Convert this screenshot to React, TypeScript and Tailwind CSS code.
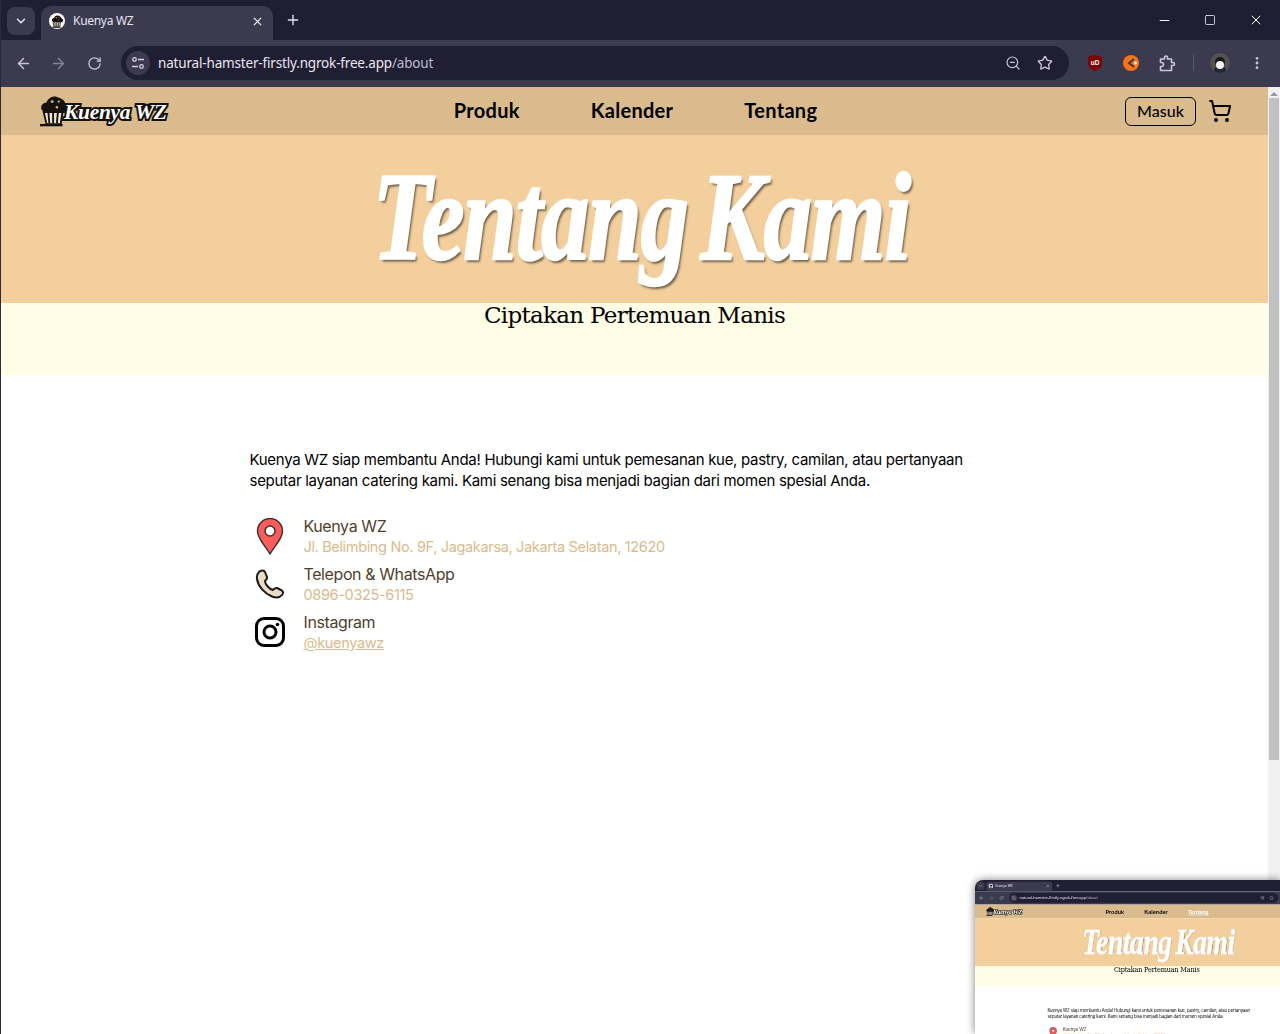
import { ArrowLeft, ArrowRight, ChevronDown, EllipsisVertical, Minus, Plus, RotateCw, ShoppingCart, Square, Star, X, ZoomOut } from "lucide-react";

function Muffin({ size = 34 }: { size?: number }) {
  return (
    <svg width={size} height={size} viewBox="0 0 34 34">
      <path d="M3 16c-2-4 1-8 5-8 1-4 6-8 11-6 4 1 8 3 9 7 3 1 5 5 3 8l-4 2H7z" fill="#17110c" />
      <circle cx="14" cy="7" r="1.500" fill="#d9bb8d" />
      <circle cx="21" cy="7" r="1.200" fill="#d9bb8d" />
      <circle cx="19" cy="13" r="1.300" fill="#d9bb8d" />
      <path d="M5 18h20l-2 13H8z" fill="#efe5d3" stroke="#17110c" strokeWidth="2" />
      <path d="M10 19l1 11M15 19v11M20 19l-1 11" stroke="#17110c" strokeWidth="2" />
      <path d="M1 32h24" stroke="#17110c" strokeWidth="2.500" />
    </svg>
  );
}

function Logo() {
  return (
    <div className="flex items-center">
      <Muffin size={32} />
      <span className="-ml-[7px] mt-[3px] font-['Liberation_Serif',serif] text-[21.500px] leading-none font-bold tracking-[-0.3px] whitespace-nowrap text-white italic [-webkit-text-stroke:4px_#17110c] [paint-order:stroke_fill]">
        Kuenya WZ
      </span>
    </div>
  );
}

function PinIcon() {
  return (
    <svg width="28" height="37" viewBox="0 0 28 37">
      <path d="M14 36C9 27 1.500 21 1.500 13a12.500 12.500 0 0 1 25 0c0 8-7.500 14-12.500 23z" fill="#fb5d5d" stroke="#3f3030" strokeWidth="1.500" />
      <circle cx="14" cy="13" r="5" fill="#fff" stroke="#3f3030" strokeWidth="1.500" />
    </svg>
  );
}

function PhoneIcon() {
  return (
    <svg width="30" height="30" viewBox="0 0 30 30">
      <path
        d="M4 3C6 1 9 1 10 3L12 8C12.500 10 11 11 10 12C10 15 14 20 18 21C19 20 20 18.500 22 19L26 21C28.500 22 28.500 24 27 26C25 28.500 21 29 17 27.500C9 24 3 17 2 10C1.500 7 2.500 4.500 4 3Z"
        fill="#eadcc6"
        stroke="#1a1a1a"
        strokeWidth="2"
        strokeLinejoin="round"
      />
    </svg>
  );
}

function InstagramIcon() {
  return (
    <svg width="30" height="30" viewBox="0 0 30 30" fill="none">
      <rect x="1.500" y="1.500" width="27" height="27" rx="7.500" stroke="#000" strokeWidth="3" />
      <circle cx="15" cy="15" r="6" stroke="#000" strokeWidth="3" />
      <circle cx="22.500" cy="7.500" r="1.800" fill="#000" />
    </svg>
  );
}

function BrowserBar() {
  return (
    <div className="shrink-0 font-['Noto_Sans',sans-serif]">
      <div className="flex h-10 items-end bg-[#201e33] pl-[6px]">
        <div className="mb-[5px] flex h-7 w-7 items-center justify-center self-end rounded-lg bg-[#3c3a4e] text-[#e6e4ee]">
          <ChevronDown size={14} strokeWidth={2.500} />
        </div>
        <div className="ml-[6px] flex h-[34px] w-[232px] items-center rounded-t-[10px] bg-[#3c3a4e] pr-[9px] pb-1 pl-2 text-[#e6e4ee]">
          <span className="flex h-4 w-4 items-center justify-center overflow-hidden rounded-full bg-white">
            <Muffin size={13} />
          </span>
          <span className="ml-2 flex-1 text-xs tracking-[-0.3px]">Kuenya WZ</span>
          <X size={13} strokeWidth={2.200} />
        </div>
        <Plus size={16} strokeWidth={2} className="mb-[12px] ml-[12px] text-[#e6e4ee]" />
        <div className="mb-[12px] ml-auto flex items-center text-white">
          <Minus size={15} strokeWidth={1.500} className="mr-[32px]" />
          <Square size={12} strokeWidth={1.500} className="mr-[32px]" />
          <X size={16} strokeWidth={1.500} className="mr-[16px]" />
        </div>
      </div>
      <div className="flex h-[47px] items-center bg-[#3c3a4e] pb-[1px] text-[#c9c7d5]">
        <ArrowLeft size={17} strokeWidth={2} className="ml-[14px]" />
        <ArrowRight size={17} strokeWidth={2} className="ml-[18px] text-[#85839a]" />
        <RotateCw size={15} strokeWidth={2} className="ml-[20px]" />
        <div className="ml-[19px] flex h-[34px] w-[948px] items-center rounded-full bg-[#201e33] pr-[16px] pl-[5px]">
          <span className="flex h-6 w-6 items-center justify-center rounded-full bg-[#3c3a4e]">
            <svg width="14" height="14" viewBox="0 0 14 14" fill="none" stroke="#d5d3e0" strokeWidth="1.300">
              <circle cx="3.500" cy="3.500" r="1.800" />
              <path d="M7 3.500h6M1 10.500h6" />
              <circle cx="10.500" cy="10.500" r="1.800" />
            </svg>
          </span>
          <span className="ml-[8px] flex-1 text-[13.500px] tracking-[-0.17px] text-[#e8e6f0]">
            natural-hamster-firstly.ngrok-free.app<span className="text-[#bdbbca]">/about</span>
          </span>
          <ZoomOut size={16} strokeWidth={1.800} />
          <Star size={16} strokeWidth={2} className="ml-[16px]" />
        </div>
        <svg width="14" height="16" viewBox="0 0 14 16" className="ml-[19px]">
          <path d="M7 0l7 2v6c0 4-3 6.500-7 8-4-1.500-7-4-7-8V2z" fill="#800000" />
          <text x="7" y="10" fontSize="6.500" fontWeight="700" fill="#fff" textAnchor="middle" fontFamily="Liberation Sans">
            uD
          </text>
        </svg>
        <svg width="16" height="16" viewBox="0 0 16 16" className="ml-[21px]">
          <circle cx="8" cy="8" r="8" fill="#f97316" />
          <path d="M11 4 6 8l5 4" fill="none" stroke="#3c3a4e" strokeWidth="2" />
          <circle cx="12.500" cy="8" r="1.500" fill="#fff" />
        </svg>
        <svg width="17" height="17" viewBox="0 0 17 17" fill="none" stroke="#c9c7d5" strokeWidth="1.600" className="ml-[20px]">
          <path d="M1.500 4h4V2.500a1.500 1.500 0 0 1 3 0V4h4v3.500h1.500a1.500 1.500 0 0 1 0 3H12.500V15.500H1.500v-4h1a2 2 0 0 0 0-4h-1z" strokeLinejoin="round" />
        </svg>
        <span className="ml-[17px] h-4 w-px bg-[#5a586c]" />
        <span className="ml-[16px] flex h-5 w-5 items-center justify-center overflow-hidden rounded-full bg-[#55534f]">
          <span className="mt-1 h-2 w-2 rounded-full bg-[#f3f3f3] shadow-[0_-3px_0_1px_#191919,0_6px_0_2px_#22263a]" />
        </span>
        <EllipsisVertical size={16} strokeWidth={2.200} className="ml-[19px]" />
      </div>
    </div>
  );
}

function Site({ active = false }: { active?: boolean }) {
  return (
    <div className="min-w-0 flex-1 bg-white">
      <nav className="flex h-12 items-center bg-[#d9bb8d]">
        <div className="flex-1 pl-[38px]">
          <Logo />
        </div>
        <ul className="-mt-[3px] flex gap-[71px] font-['Lato',sans-serif] text-xl leading-none font-bold tracking-[0.3px] text-black">
          <li>Produk</li>
          <li>Kalender</li>
          <li className={active ? "text-white underline underline-offset-4" : ""}>Tentang</li>
        </ul>
        <div className="flex flex-1 items-center justify-end pr-[36px]">
          <button className="h-[29px] w-[71px] rounded-md border border-black font-['Lato',sans-serif] text-base leading-none font-medium text-black">
            Masuk
          </button>
          <ShoppingCart size={24} strokeWidth={2} className="ml-[12px] text-black" />
        </div>
      </nav>
      <section className="relative flex h-[168px] justify-center bg-[#f3cf9d] pt-[11px] pl-[14px]">
        <h1 className="h-[110px] origin-top scale-y-[1.3] font-['Liberation_Serif',serif] text-[96px] leading-[110px] font-bold tracking-[-1px] whitespace-nowrap text-white italic [word-spacing:-10px] [-webkit-text-stroke:2px_#fff] [text-shadow:2px_2px_2px_rgba(0,0,0,0.55)]">
          Tentang Kami
        </h1>
      </section>
      <section className="h-[72px] bg-[#fffde5] text-center">
        <p className="font-['DejaVu_Serif',serif] text-[23px] leading-[25px] tracking-[-0.7px] text-black">
          Ciptakan Pertemuan Manis
        </p>
      </section>
      <section className="mx-auto mt-[74px] w-[770px] font-['Inter',sans-serif]">
        <p className="max-w-3xl text-[15px] leading-[21px] tracking-[-0.29px] text-black">
          Kuenya WZ siap membantu Anda! Hubungi kami untuk pemesanan kue, pastry, camilan, atau pertanyaan seputar layanan catering kami. Kami senang bisa menjadi bagian dari momen spesial Anda.
        </p>
        <div className="mt-[24px] flex flex-col gap-[6px]">
          <div className="flex h-[42px] items-center">
            <span className="flex w-[40px] justify-center">
              <PinIcon />
            </span>
            <div className="ml-[14px]">
              <p className="text-[16px] leading-[22px] tracking-[-0.4px] text-[#4f3f2c]">Kuenya WZ</p>
              <p className="text-[14.500px] leading-[20px] tracking-[-0.34px] text-[#d9bb8d]">Jl. Belimbing No. 9F, Jagakarsa, Jakarta Selatan, 12620</p>
            </div>
          </div>
          <div className="flex h-[42px] items-center">
            <span className="flex w-[40px] justify-center">
              <PhoneIcon />
            </span>
            <div className="ml-[14px]">
              <p className="text-[16px] leading-[22px] tracking-[-0.4px] text-[#4f3f2c]">Telepon &amp; WhatsApp</p>
              <p className="text-[14.500px] leading-[20px] tracking-[-0.34px] text-[#d9bb8d]">0896-0325-6115</p>
            </div>
          </div>
          <div className="flex h-[42px] items-center">
            <span className="flex w-[40px] justify-center">
              <InstagramIcon />
            </span>
            <div className="ml-[14px]">
              <p className="text-[16px] leading-[22px] tracking-[-0.4px] text-[#4f3f2c]">Instagram</p>
              <p className="text-[14.500px] leading-[20px] tracking-[-0.34px] text-[#d9bb8d] underline">@kuenyawz</p>
            </div>
          </div>
        </div>
      </section>
    </div>
  );
}

function Scrollbar() {
  return (
    <div className="flex w-3 shrink-0 flex-col items-center bg-[#f1f1f1] pt-[5px]">
      <span className="h-0 w-0 border-x-[4px] border-b-[4px] border-x-transparent border-b-[#9a9a9a]" />
      <span className="mt-[2px] h-[662px] w-[10px] bg-[#c1c1c1]" />
    </div>
  );
}

export default function App() {
  return (
    <div className="relative flex h-[1034px] w-[1280px] flex-col overflow-hidden border-l border-[#2b2a35] bg-white">
      <BrowserBar />
      <div className="flex min-h-0 flex-1">
        <Site />
        <Scrollbar />
      </div>
      {/* preview window that floats in the corner */}
      <div className="absolute top-[880px] left-[974px] h-[154px] w-[306px] overflow-hidden rounded-tl-lg shadow-[0_0_8px_rgba(0,0,0,0.5)]">
        <div className="flex h-[947px] w-[1280px] origin-top-left scale-[0.284] flex-col bg-white blur-[0.6px]">
          <BrowserBar />
          <div className="flex min-h-0 flex-1">
            <Site active />
          </div>
        </div>
      </div>
    </div>
  );
}
